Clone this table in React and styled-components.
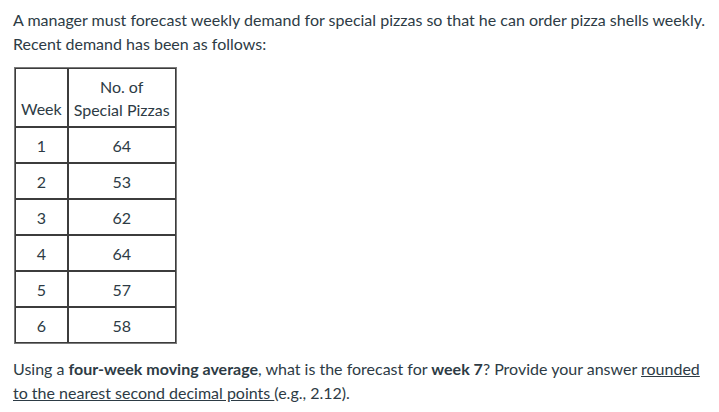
import React from 'react';
import styled, { createGlobalStyle } from 'styled-components';

const GlobalStyle = createGlobalStyle`
  body {
    margin: 0;
    background: #fff;
    font-family: Lato, "Open Sans", sans-serif;
    color: #2d3b45;
  }
`

const Page = styled.div`
  padding: 8px 13px;
  font-size: 16px;
  line-height: 24px;
`

const Para = styled.p`
  margin: 0;
`

const Table = styled.table`
  margin: 11px 0 13px 1px;
  border: 1px solid #7a7a7a;
  border-collapse: separate;
  border-spacing: 0;
  font-size: 16px;
`

const Cell = styled.td`
  border: 1px solid #3c3c3c;
  text-align: center;
  height: ${p => p.h || 34}px;
  padding: 0 5px;
  line-height: 23px;
  vertical-align: ${p => p.valign || 'middle'};
`

const HeadLabel = styled.div`
  padding-bottom: 6px;
`

const Bold = styled.strong`
  font-weight: 700;
`

const Under = styled.span`
  text-decoration: underline;
`

const rows = [
  [1, 64],
  [2, 53],
  [3, 62],
  [4, 64],
  [5, 57],
  [6, 58],
]

const App = () => {
  return (
    <Page>
      <GlobalStyle />
      <Para>
        A manager must forecast weekly demand for special pizzas so that he can order pizza shells weekly.
        <br />
        Recent demand has been as follows:
      </Para>
      <Table>
        <tbody>
          <tr>
            <Cell h={57} valign="bottom"><HeadLabel>Week</HeadLabel></Cell>
            <Cell h={57}>No. of<br />Special Pizzas</Cell>
          </tr>
          {rows.map(([wk, n]) => (
            <tr key={wk}>
              <Cell>{wk}</Cell>
              <Cell>{n}</Cell>
            </tr>
          ))}
        </tbody>
      </Table>
      <Para>
        Using a <Bold>four-week moving average</Bold>, what is the forecast for <Bold>week 7</Bold>? Provide your answer <Under>rounded</Under>
        <br />
        <Under>to the nearest second decimal points </Under>(e.g., 2.12).
      </Para>
    </Page>
  )
}

export default App;
